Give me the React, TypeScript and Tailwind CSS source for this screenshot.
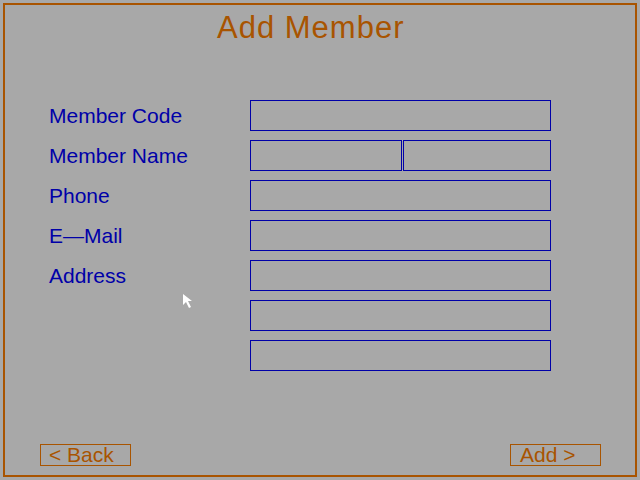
import React from 'react';

const font = { fontFamily: '"Liberation Sans", Arial, sans-serif' };

const Field: React.FC<{ className?: string }> = ({ className = '' }) => (
  <div className={`h-[31px] border border-[#0000a8] ${className}`} />
);

const Row: React.FC<{ label?: string; children: React.ReactNode }> = ({ label, children }) => (
  <div className="flex h-[31px]">
    <div className="w-[201px] text-[21px] leading-[31px] text-[#0000a8] whitespace-nowrap">{label}</div>
    <div className="flex w-[301px]">{children}</div>
  </div>
);

export default function App() {
  return (
    <div className="w-[640px] h-[480px] bg-[#a8a8a8] p-[3px] relative" style={font}>
      <div className="h-full border-2 border-[#a85400] flex flex-col">
        <div className="pt-[7px] pl-[212px] text-[31px] leading-[31px] tracking-[1px] text-[#a85400] whitespace-nowrap">
          Add Member
        </div>

        <div className="mt-[57px] pl-[44px] flex flex-col gap-[9px]">
          <Row label="Member Code"><Field className="w-full" /></Row>
          <Row label="Member Name">
            <Field className="w-[152px]" />
            <Field className="w-[148px] ml-[1px]" />
          </Row>
          <Row label="Phone"><Field className="w-full" /></Row>
          <Row label="E—Mail"><Field className="w-full" /></Row>
          <Row label="Address"><Field className="w-full" /></Row>
          <Row><Field className="w-full" /></Row>
          <Row><Field className="w-full" /></Row>
        </div>

        <div className="mt-auto mb-[9px] flex justify-between pl-[35px] pr-[34px] text-[21px] leading-[20px] text-[#a85400]">
          <div className="w-[91px] h-[22px] border border-[#a85400] pl-[8px] whitespace-nowrap">&lt; Back</div>
          <div className="w-[91px] h-[22px] border border-[#a85400] pl-[9px] whitespace-nowrap">Add &gt;</div>
        </div>
      </div>

      <svg className="absolute left-[183px] top-[294px]" width="10" height="16" viewBox="0 0 10 16">
        <polygon points="0,0 0,11 3,8 6,14 8,13 5,7 9,7" fill="#ffffff" />
      </svg>
    </div>
  );
}
